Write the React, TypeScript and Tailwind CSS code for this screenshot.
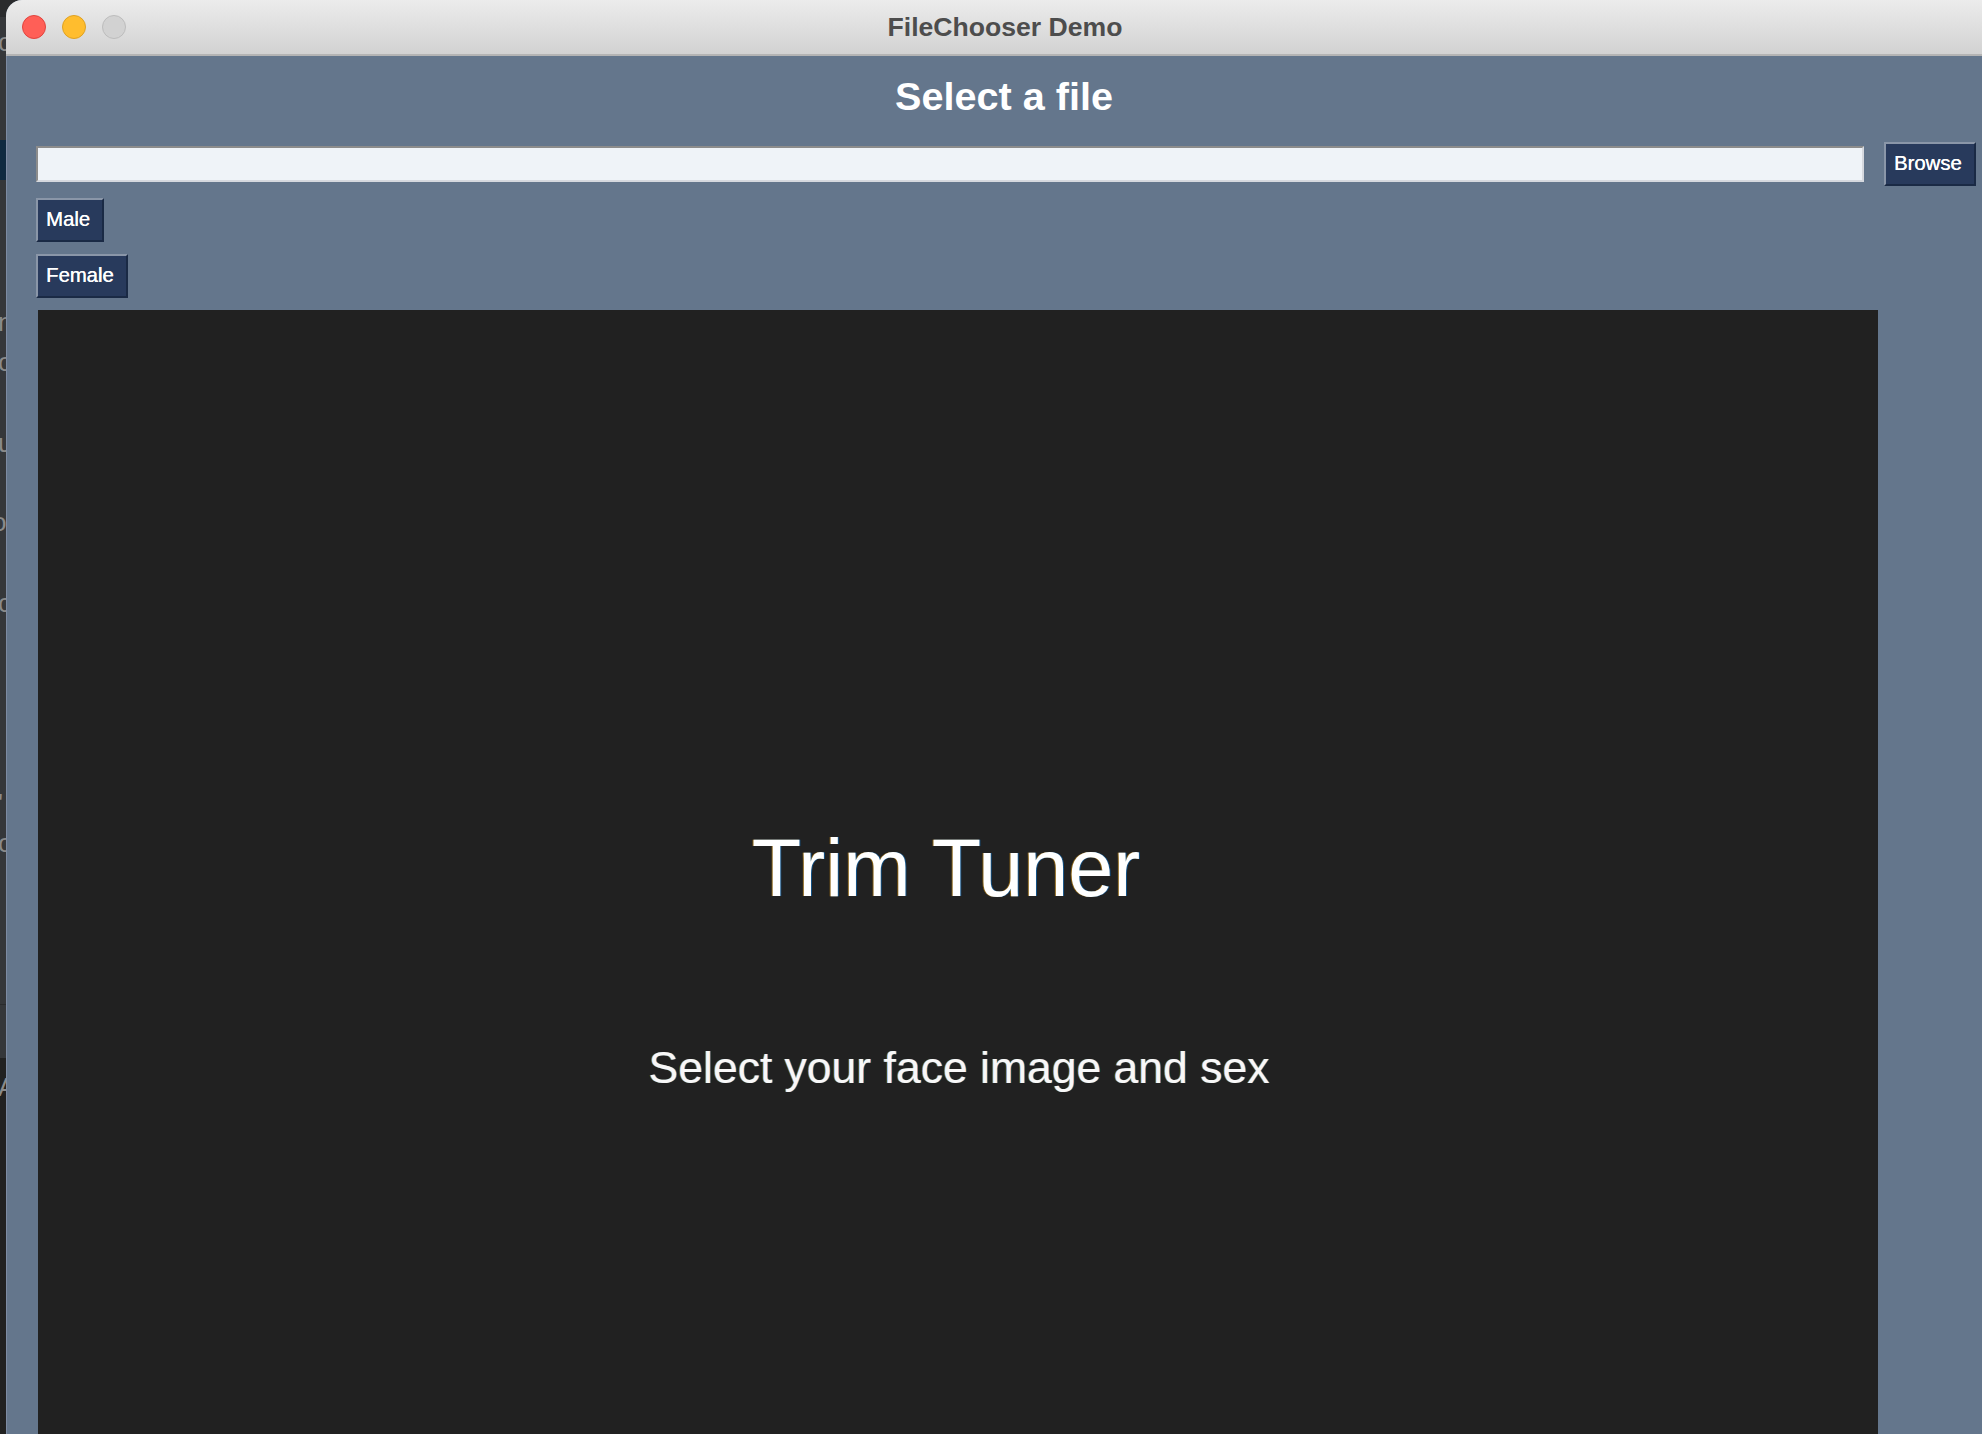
const editorRows = [
  { h: 'h-[17px]', text: '', bg: 'bg-[#2a2b2d]' },
  { h: 'h-[50px]', text: 'c', bg: '' },
  { h: 'h-[73px]', text: '', bg: '' },
  { h: 'h-[40px]', text: '', bg: 'bg-[#0f2a40]' },
  { h: 'h-[122px]', text: '', bg: '' },
  { h: 'h-[40px]', text: 'n', bg: '' },
  { h: 'h-[40px]', text: 'o', bg: '' },
  { h: 'h-[41px]', text: '', bg: '' },
  { h: 'h-[40px]', text: 'u', bg: '' },
  { h: 'h-[39px]', text: '', bg: '' },
  { h: 'h-[40px]', text: 'o:', bg: '' },
  { h: 'h-[41px]', text: '', bg: '' },
  { h: 'h-[40px]', text: 'c', bg: '' },
  { h: 'h-[160px]', text: '', bg: '' },
  { h: 'h-[40px]', text: '\'', bg: '' },
  { h: 'h-[40px]', text: 'o', bg: '' },
  { h: 'h-[142px]', text: '', bg: 'border-b border-[#2a2b2d]' },
  { h: 'h-[53px]', text: '', bg: '' },
  { h: 'h-[9px]', text: '', bg: 'bg-[#212121]' },
  { h: 'h-[40px]', text: 'A', bg: 'bg-[#212121]' },
];

function Button({ label, className = '' }: { label: string; className?: string }) {
  return (
    <button className={`h-[44px] border-2 border-t-[#8a96a8] border-l-[#8a96a8] border-r-[#1a2a45] border-b-[#1a2a45] bg-[#283a5c] pb-[2px] pl-[8px] text-left text-[20.3px] text-white [text-shadow:0.3px_0_0_#fff] ${className}`}>
      {label}
    </button>
  );
}

export default function App() {
  return (
    <div className="flex h-[1434px] w-[1982px] overflow-hidden bg-[#2a2b2d] font-['Liberation_Sans',Arial,sans-serif]">
      <div className="flex w-[6px] shrink-0 flex-col overflow-hidden bg-[#35373a]">
        {editorRows.map((row, i) => (
          <div key={i} className={`${row.h} ${row.bg} flex shrink-0 items-center whitespace-nowrap text-[26px] text-[#8a8a8a]`}>
            <span className={row.text === 'o:' ? '-ml-[8px]' : '-ml-[2px]'}>{row.text}</span>
          </div>
        ))}
        <div className="flex-1 bg-[#212121]" />
      </div>

      <div className="flex min-w-0 flex-1 flex-col overflow-hidden rounded-tl-[16px] bg-[#64768c]">
        <div className="relative flex h-[56px] shrink-0 items-center border-b-2 border-[#b4b4b4] bg-gradient-to-b from-[#ececec] to-[#d2d2d2] pl-[16px]">
          <div className="flex gap-[16px]">
            <span className="h-[24px] w-[24px] rounded-full border border-[#e0443e] bg-[#ff5f57]" />
            <span className="h-[24px] w-[24px] rounded-full border border-[#dea123] bg-[#ffbd2e]" />
            <span className="h-[24px] w-[24px] rounded-full border border-[#bcbcbc] bg-[#d2d2d2]" />
          </div>
          <div className="absolute left-[22px] right-0 top-[12px] text-center text-[26.6px] font-bold leading-[30px] text-[#4d4d4d]">
            FileChooser Demo
          </div>
        </div>

        <div className="flex flex-1 flex-col border-l border-[#7d8ba3] pl-[29px] pr-[6px]">
          <h1 className="mr-[-2px] mt-[16px] h-[48px] pr-[6px] text-center text-[39.6px] font-bold leading-[48px] text-white">Select a file</h1>

          <div className="mt-[22px] flex items-center">
            <div className="h-[36px] w-[1828px] border-2 border-t-[#8c8c8c] border-l-[#8c8c8c] border-r-[#d6d9df] border-b-[#d6d9df] bg-[#eff3f8]" />
            <Button label="Browse" className="ml-[20px] w-[92px]" />
          </div>

          <Button label="Male" className="mt-[12px] w-[68px]" />
          <Button label="Female" className="mt-[12px] w-[92px]" />

          <div className="ml-[2px] mt-[12px] flex w-[1840px] flex-1 flex-col items-center bg-[#212121] text-white">
            <div className="mr-[24px] mt-[512px] text-[81px] leading-[92px] [text-shadow:1px_0_0_rgba(0,140,255,0.45),-1px_0_0_rgba(255,170,0,0.45)]">Trim Tuner</div>
            <div className="ml-[2px] mt-[128px] text-[44.5px] leading-[52px] text-[#f8f8f8] [text-shadow:1px_0_0_rgba(0,140,255,0.45),-1px_0_0_rgba(255,170,0,0.45)]">Select your face image and sex</div>
          </div>
        </div>
      </div>
    </div>
  );
}
